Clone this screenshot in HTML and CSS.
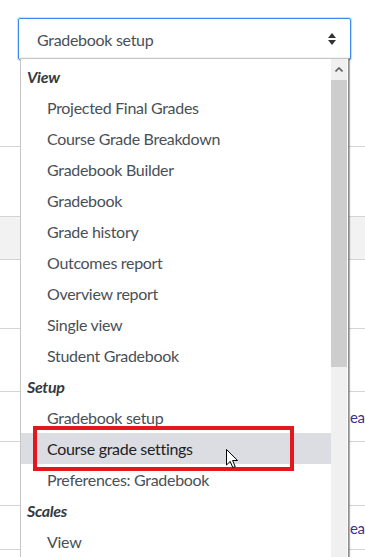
FILE: index.html
```html
<!DOCTYPE html>
<html lang="en">
<head>
    <meta charset="UTF-8">
    <meta name="viewport" content="width=device-width, initial-scale=1.0">
    <title>Gradebook setup</title>
    <link rel="stylesheet" href="styles.css">
</head>
<body>
    <div class="page">
        <!-- Report switcher -->
        <div class="select">
            <span>Gradebook setup</span>
            <svg class="select-arrows" width="8" height="12" viewBox="0 0 8 12">
                <path d="M4 0 L8 5 L0 5 Z" fill="#333"/>
                <path d="M0 7 L8 7 L4 12 Z" fill="#333"/>
            </svg>
        </div>

        <!-- Table behind the open dropdown -->
        <div class="report">
            <div class="report-row row-a"></div>
            <div class="report-row row-b"></div>
            <div class="report-row row-c"></div>
            <div class="report-row row-d"></div>
            <div class="report-row row-e"></div>
            <div class="report-row row-f"><span class="link">ea</span></div>
            <div class="report-row row-g"></div>
            <div class="report-row row-h"><span class="link">ea</span></div>
            <div class="report-row row-i"></div>
        </div>

        <!-- Open dropdown list -->
        <div class="dropdown">
            <ul class="options">
                <li class="group">View</li>
                <li>Projected Final Grades</li>
                <li>Course Grade Breakdown</li>
                <li>Gradebook Builder</li>
                <li>Gradebook</li>
                <li>Grade history</li>
                <li>Outcomes report</li>
                <li>Overview report</li>
                <li>Single view</li>
                <li>Student Gradebook</li>
                <li class="group">Setup</li>
                <li>Gradebook setup</li>
                <li class="active">
                    Course grade settings
                    <span class="highlight-box"></span>
                    <svg class="cursor" width="13" height="20" viewBox="0 0 13 20">
                        <path d="M0.5 0.5 L0.5 16 L4.2 12.4 L6.8 18.6 L9.2 17.6 L6.6 11.5 L11.6 11.5 Z" fill="#fff" stroke="#000" stroke-width="1" stroke-linejoin="miter"/>
                    </svg>
                </li>
                <li>Preferences: Gradebook</li>
                <li class="group">Scales</li>
                <li>View</li>
            </ul>
            <div class="scrollbar">
                <div class="scroll-up">
                    <svg width="8" height="5" viewBox="0 0 8 5">
                        <path d="M0.5 4.5 L4 1 L7.5 4.5" fill="none" stroke="#606060" stroke-width="1.6"/>
                    </svg>
                </div>
                <div class="thumb"></div>
            </div>
        </div>
    </div>
</body>
</html>
```

FILE: styles.css
```css
/* Page base */
html, body {
    margin: 0;
    padding: 0;
    height: 100%;
    overflow: hidden;
    background-color: #fff;
    font-family: 'Lato', 'Liberation Sans', sans-serif;
    color: #495057;
}

.page {
    position: relative;
    height: 557px;
    padding-top: 18px;
    box-sizing: border-box;
    overflow: hidden;
}

/* Select box (focused) */
.select {
    margin-left: 18px;
    width: 333px;
    height: 42px;
    box-sizing: border-box;
    border: 1px solid #3d8af0;
    border-radius: 2px;
    box-shadow: 0 0 0 1px rgba(100, 165, 250, 0.35);
    display: flex;
    align-items: center;
    justify-content: space-between;
    padding: 0 14px 0 18px;
    font-size: 16px;
    letter-spacing: -0.3px;
    color: #495057;
}

.select-arrows {
    display: block;
}

/* Table rows visible to the right of the dropdown */
.report-row {
    box-sizing: border-box;
    border-bottom: 1px solid #d4d4d4;
    display: flex;
    align-items: center;
}

.row-a { height: 87px; }
.row-b { height: 70px; }
.row-c { height: 43px; background-color: #f2f2f2; }
.row-d { height: 69px; }
.row-e { height: 63px; }
.row-f { height: 50px; }
.row-g { height: 64px; }
.row-h { height: 44px; }
.row-i { height: 7px; border-bottom: none; }

.report-row .link {
    padding-left: 350px;
    font-size: 15px;
    letter-spacing: -0.3px;
    color: #3d2f8f;
    white-space: nowrap;
}

/* Dropdown list */
.dropdown {
    position: absolute;
    top: 58px;
    left: 20px;
    width: 329px;
    height: 499px;
    box-sizing: border-box;
    background-color: #fff;
    border: 1px solid #c6c6c6;
    border-right-color: #8c8c8c;
    border-bottom: none;
    box-shadow: 1px 0 1px rgba(0, 0, 0, 0.3);
    display: flex;
    overflow: hidden;
}

.options {
    width: 310px;
    list-style: none;
    margin: 0;
    padding: 2px 0 0;
}

.options li {
    position: relative;
    height: 31px;
    line-height: 31px;
    padding-left: 26px;
    font-size: 16px;
    letter-spacing: -0.3px;
    color: #495057;
    white-space: nowrap;
}

.options li.group {
    padding-left: 6px;
    font-weight: bold;
    font-style: italic;
    color: #343a40;
}

.options li.active {
    background-color: #dcdde2;
    color: #1d2125;
}

/* Annotation around the hovered option */
.highlight-box {
    position: absolute;
    left: 12px;
    top: -7px;
    width: 261px;
    height: 45px;
    box-sizing: border-box;
    border: 4px solid #e3171d;
}

.cursor {
    position: absolute;
    left: 205px;
    top: 16px;
}

/* Native-looking scrollbar */
.scrollbar {
    width: 16px;
    margin-right: 1px;
    background-color: #f0f0f0;
}

.scroll-up {
    height: 21px;
    display: flex;
    align-items: center;
    justify-content: center;
}

.scroll-up svg {
    display: block;
}

.thumb {
    height: 287px;
    background-color: #cdcdcd;
}
```
